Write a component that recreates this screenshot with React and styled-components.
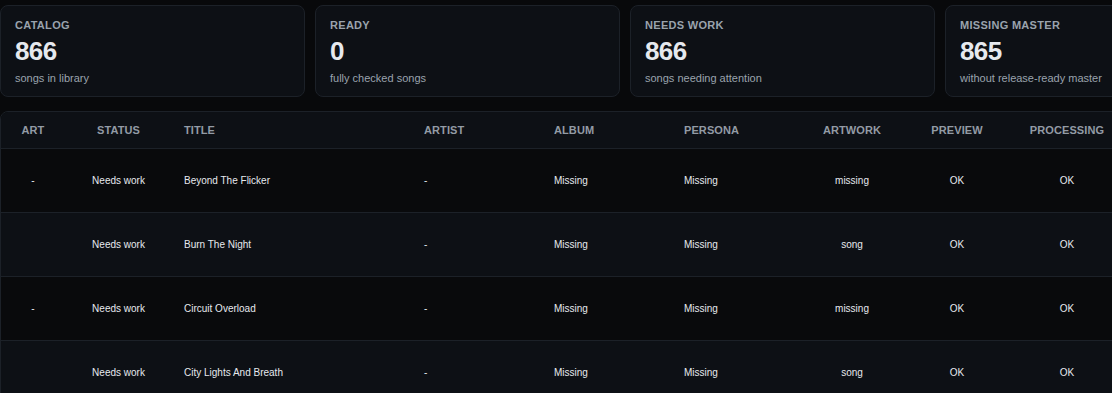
import React from "react";
import styled, { createGlobalStyle } from "styled-components";

const Global = createGlobalStyle`
  html, body { margin: 0; padding: 0; background: #08090b; overflow: hidden; }
  body { font-family: "Liberation Sans", Arial, Helvetica, sans-serif; color: #e6edf3; }
`;

const Page = styled.div`
  padding-top: 5px;
  width: 1260px;
`;

const Cards = styled.div`
  display: grid;
  grid-template-columns: repeat(4, 305px);
  column-gap: 10px;
`;

const Card = styled.div`
  box-sizing: border-box;
  height: 92px;
  padding: 13px 14px 10px;
  background: #0d1015;
  border: 1px solid #1c2128;
  border-radius: 8px;
  display: flex;
  flex-direction: column;
`;

const CardLabel = styled.div`
  font-size: 11px;
  line-height: 13px;
  font-weight: 700;
  letter-spacing: 0.3px;
  text-transform: uppercase;
  color: #9aa3ad;
`;

const CardValue = styled.div`
  margin-top: 5px;
  font-size: 26px;
  line-height: 28px;
  font-weight: 700;
  letter-spacing: -0.6px;
  color: #e6e9ee;
`;

const CardSub = styled.div`
  margin-top: 7px;
  font-size: 11px;
  line-height: 13px;
  color: #9aa3ad;
`;

const TableWrap = styled.div`
  margin-top: 14px;
  width: 1140px;
  border: 1px solid #1c2128;
  border-radius: 8px;
  overflow: hidden;
`;

const Table = styled.table`
  width: 1140px;
  table-layout: fixed;
  border-collapse: collapse;
`;

const Th = styled.th`
  height: 36px;
  padding: 0 12px;
  background: #0d1015;
  border-bottom: 1px solid #1c2128;
  font-size: 11px;
  font-weight: 700;
  letter-spacing: 0.1px;
  text-transform: uppercase;
  color: #939ba5;
  text-align: ${(p) => (p.$center ? "center" : "left")};
  white-space: nowrap;
`;

const Tr = styled.tr`
  background: ${(p) => (p.$alt ? "#0d1015" : "#090a0c")};
`;

const Td = styled.td`
  height: 63px;
  padding: 0 12px;
  border-bottom: 1px solid #1c2128;
  font-size: 10px;
  color: #e6e9ee;
  text-align: ${(p) => (p.$center ? "center" : "left")};
  white-space: nowrap;
`;

const cols = [
  { key: "art", label: "Art", w: 64, center: true },
  { key: "status", label: "Status", w: 107, center: true },
  { key: "title", label: "Title", w: 240 },
  { key: "artist", label: "Artist", w: 130 },
  { key: "album", label: "Album", w: 130 },
  { key: "persona", label: "Persona", w: 130 },
  { key: "artwork", label: "Artwork", w: 100, center: true },
  { key: "preview", label: "Preview", w: 110, center: true },
  { key: "processing", label: "Processing", w: 110, center: true },
  { key: "extra", label: "", w: 19 },
];

const rows = [
  { art: "-", status: "Needs work", title: "Beyond The Flicker", artist: "-", album: "Missing", persona: "Missing", artwork: "missing", preview: "OK", processing: "OK" },
  { art: "", status: "Needs work", title: "Burn The Night", artist: "-", album: "Missing", persona: "Missing", artwork: "song", preview: "OK", processing: "OK" },
  { art: "-", status: "Needs work", title: "Circuit Overload", artist: "-", album: "Missing", persona: "Missing", artwork: "missing", preview: "OK", processing: "OK" },
  { art: "", status: "Needs work", title: "City Lights And Breath", artist: "-", album: "Missing", persona: "Missing", artwork: "song", preview: "OK", processing: "OK" },
];

const stats = [
  { label: "Catalog", value: "866", sub: "songs in library" },
  { label: "Ready", value: "0", sub: "fully checked songs" },
  { label: "Needs work", value: "866", sub: "songs needing attention" },
  { label: "Missing master", value: "865", sub: "without release-ready master" },
];

export default function App() {
  return (
    <>
      <Global />
      <Page>
        <Cards>
          {stats.map((s) => (
            <Card key={s.label}>
              <CardLabel>{s.label}</CardLabel>
              <CardValue>{s.value}</CardValue>
              <CardSub>{s.sub}</CardSub>
            </Card>
          ))}
        </Cards>
        <TableWrap>
          <Table>
            <colgroup>
              {cols.map((c) => (
                <col key={c.key} style={{ width: c.w }} />
              ))}
            </colgroup>
            <thead>
              <tr>
                {cols.map((c) => (
                  <Th key={c.key} $center={c.center}>{c.label}</Th>
                ))}
              </tr>
            </thead>
            <tbody>
              {rows.map((r, i) => (
                <Tr key={r.title} $alt={i % 2 === 1}>
                  {cols.map((c) => (
                    <Td key={c.key} $center={c.center}>{r[c.key] || ""}</Td>
                  ))}
                </Tr>
              ))}
            </tbody>
          </Table>
        </TableWrap>
      </Page>
    </>
  );
}
